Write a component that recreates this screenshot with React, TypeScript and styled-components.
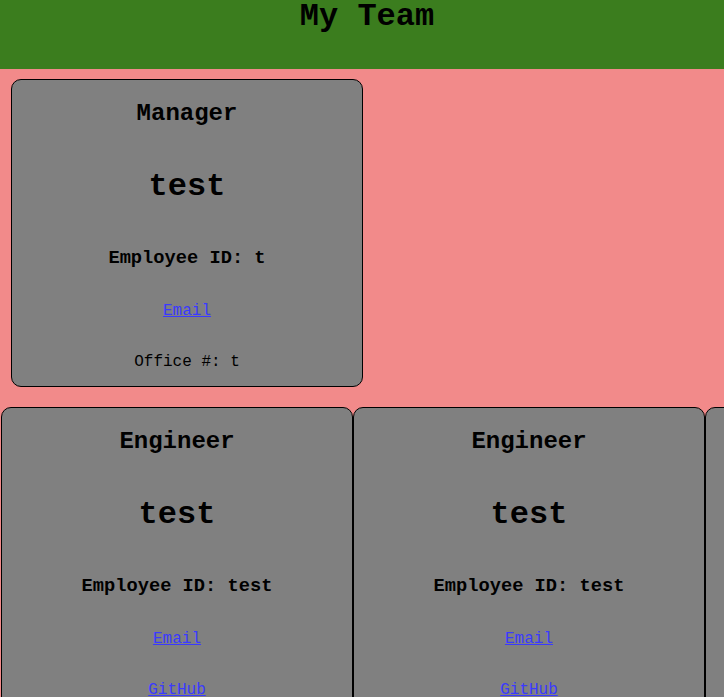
import React from "react";
import styled, { createGlobalStyle } from "styled-components";

const Global = createGlobalStyle`
  html, body {
    margin: 0;
    padding: 0;
    overflow: hidden;
    background: #f28a8a;
    font-family: "Liberation Mono", "Courier New", monospace;
  }
`;

const Page = styled.div`
  width: 724px;
  min-height: 697px;
  background: #f28a8a;
`;

const Header = styled.header`
  height: 69px;
  background: #3b7d1e;
  padding-left: 10px;
  box-sizing: border-box;
`;

const Title = styled.h1`
  margin: 0;
  font-size: 32px;
  line-height: 33px;
  font-weight: bold;
  text-align: center;
  color: #000;
`;

const Row = styled.div<{ $indent: number; $top: number }>`
  display: flex;
  flex-wrap: nowrap;
  padding-left: ${(p) => p.$indent}px;
  margin-top: ${(p) => p.$top}px;
`;

const Card = styled.div`
  flex: 0 0 auto;
  width: 352px;
  height: 308px;
  box-sizing: border-box;
  border: 1px solid #000;
  border-radius: 10px;
  background: #808080;
  display: flex;
  flex-direction: column;
  align-items: center;
  padding-top: 20px;
  overflow: hidden;
`;

const Role = styled.h2`
  margin: 0 0 40px;
  font-size: 24px;
  font-weight: bold;
  color: #000;
`;

const Name = styled.h1`
  margin: 1px 0 42px;
  font-size: 32px;
  font-weight: bold;
  color: #000;
`;

const Id = styled.h3`
  margin: 0 0 33px;
  font-size: 18.72px;
  font-weight: bold;
  color: #000;
`;

const Line = styled.p`
  margin: 0 0 33px;
  font-size: 16px;
  color: #000;
`;

const Link = styled.a`
  color: #3a3aff;
  text-decoration: underline;
`;

type Member = {
  role: string;
  name: string;
  id: string;
  extra: React.ReactNode;
};

const MemberCard = ({ m }: { m: Member }) => (
  <Card>
    <Role>{m.role}</Role>
    <Name>{m.name}</Name>
    <Id>Employee ID: {m.id}</Id>
    <Line>
      <Link href="#">Email</Link>
    </Line>
    <Line>{m.extra}</Line>
  </Card>
);

const manager: Member = {
  role: "Manager",
  name: "test",
  id: "t",
  extra: "Office #: t",
};

const engineers: Member[] = [0, 1, 2].map(() => ({
  role: "Engineer",
  name: "test",
  id: "test",
  extra: <Link href="#">GitHub</Link>,
}));

export default function App() {
  return (
    <Page>
      <Global />
      <Header>
        <Title>My Team</Title>
      </Header>
      <Row $indent={11} $top={10}>
        <MemberCard m={manager} />
      </Row>
      <Row $indent={1} $top={20}>
        {engineers.map((e, i) => (
          <MemberCard key={i} m={e} />
        ))}
      </Row>
    </Page>
  );
}
